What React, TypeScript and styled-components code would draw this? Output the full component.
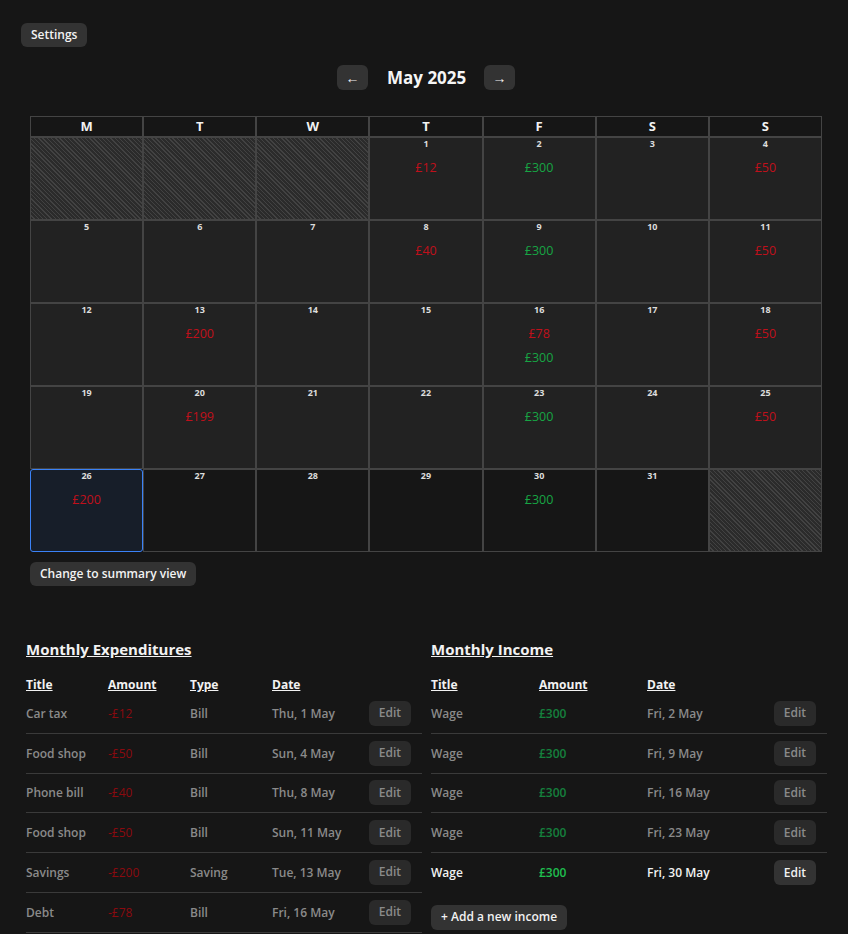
import React from "react";
import styled, { createGlobalStyle, css } from "styled-components";

const Global = createGlobalStyle`
  html, body { margin: 0; padding: 0; background: #161616; }
  body { font-family: "Segoe UI", "Open Sans", "Noto Sans", sans-serif; color: #f2f2f2; }
  * { box-sizing: border-box; }
`;

const Page = styled.div`
  padding: 22px 21px 0 21px;
  min-height: 934px;
`;

const Button = styled.button<{ $dim?: boolean }>`
  font-family: inherit;
  font-size: 12px;
  font-weight: 600;
  border: none;
  border-radius: 6px;
  background: ${(p) => (p.$dim ? "#2a2a2a" : "#333333")};
  color: ${(p) => (p.$dim ? "#8a8a8a" : "#f2f2f2")};
  height: 24px;
  padding: 0 10px;
  cursor: pointer;
  line-height: 24px;
`;

const Nav = styled.div`
  display: flex;
  justify-content: center;
  align-items: center;
  gap: 19px;
  margin-top: 18px;
  padding-left: 4px;
`;

const NavButton = styled(Button)`
  width: 31px;
  height: 25px;
  padding: 0;
  font-size: 14px;
`;

const MonthTitle = styled.h2`
  margin: 0;
  font-size: 17px;
  font-weight: 700;
  width: 78px;
  text-align: center;
  color: #f5f5f5;
  white-space: nowrap;
`;

const Calendar = styled.div`
  margin: 26px 5px 0 9px;
  display: grid;
  grid-template-columns: repeat(7, 1fr);
  width: 792px;
`;

const HeadCell = styled.div`
  border: 1px solid #444;
  height: 21px;
  font-size: 13px;
  font-weight: 700;
  text-align: center;
  line-height: 19px;
  background: #161616;
`;

type Kind = "blank" | "past" | "today" | "future";

const Cell = styled.div<{ $kind: Kind }>`
  border: 1px solid #444;
  height: 83px;
  display: flex;
  flex-direction: column;
  align-items: center;
  padding-top: 0;
  ${(p) =>
    p.$kind === "blank" &&
    css`
      background: repeating-linear-gradient(
        45deg,
        #2b2b2b 0px,
        #2b2b2b 2px,
        #424242 2px,
        #424242 3px
      );
    `}
  ${(p) => p.$kind === "past" && css`background: #222;`}
  ${(p) => p.$kind === "future" && css`background: #161616;`}
  ${(p) =>
    p.$kind === "today" &&
    css`
      background: #171e29;
      border-color: #3b82f6;
      border-radius: 3px;
    `}
`;

const DayNum = styled.div`
  font-size: 9px;
  font-weight: 700;
  color: #dcdcdc;
  line-height: 12px;
`;

const Amounts = styled.div`
  display: flex;
  flex-direction: column;
  align-items: center;
  gap: 6px;
  margin-top: 9px;
`;

const Amt = styled.div<{ $type: "out" | "in" }>`
  font-size: 12.5px;
  line-height: 18px;
  color: ${(p) => (p.$type === "out" ? "#c0101b" : "#17a544")};
`;

const SummaryRow = styled.div`
  margin: 9px 0 0 9px;
`;

const Sections = styled.div`
  display: grid;
  grid-template-columns: 396px 396px;
  gap: 9px;
  margin-top: 51px;
  padding-left: 5px;
`;

const Section = styled.section``;

const Heading = styled.h3`
  margin: 0 0 15px;
  font-size: 15px;
  font-weight: 700;
  text-decoration: underline;
  line-height: 24px;
  color: #f2f2f2;
`;

const Row = styled.div<{ $cols: string; $divider?: boolean; $head?: boolean }>`
  display: grid;
  grid-template-columns: ${(p) => p.$cols};
  align-items: center;
  height: ${(p) => (p.$head ? "auto" : "39.75px")};
  border-bottom: ${(p) => (p.$divider ? "1px solid #3a3a3a" : "none")};
`;

const HeadText = styled.div`
  font-size: 12px;
  font-weight: 700;
  text-decoration: underline;
  color: #f2f2f2;
  line-height: 18px;
`;

const CellText = styled.div<{ $bright?: boolean }>`
  font-size: 12px;
  font-weight: 600;
  color: ${(p) => (p.$bright ? "#f2f2f2" : "#8a8a8a")};
`;

const Money = styled.div<{ $type: "out" | "in"; $bright?: boolean }>`
  font-size: 12px;
  font-weight: ${(p) => (p.$type === "in" ? 600 : 400)};
  color: ${(p) =>
    p.$type === "out" ? "#8b0a0f" : p.$bright ? "#1fbf4f" : "#15803d"};
`;

const EditCell = styled.div`
  display: flex;
  justify-content: flex-end;
  padding-right: 11px;
`;

const EditButton = styled(Button)`
  width: 42px;
  height: 25px;
  padding: 0;
`;

const AddButton = styled(Button)`
  margin-top: 12px;
  height: 25px;
  padding: 0 10px;
`;

const calendar: { day?: number; kind: Kind; amts?: { t: "out" | "in"; v: string }[] }[] = [
  { kind: "blank" },
  { kind: "blank" },
  { kind: "blank" },
  { day: 1, kind: "past", amts: [{ t: "out", v: "£12" }] },
  { day: 2, kind: "past", amts: [{ t: "in", v: "£300" }] },
  { day: 3, kind: "past" },
  { day: 4, kind: "past", amts: [{ t: "out", v: "£50" }] },
  { day: 5, kind: "past" },
  { day: 6, kind: "past" },
  { day: 7, kind: "past" },
  { day: 8, kind: "past", amts: [{ t: "out", v: "£40" }] },
  { day: 9, kind: "past", amts: [{ t: "in", v: "£300" }] },
  { day: 10, kind: "past" },
  { day: 11, kind: "past", amts: [{ t: "out", v: "£50" }] },
  { day: 12, kind: "past" },
  { day: 13, kind: "past", amts: [{ t: "out", v: "£200" }] },
  { day: 14, kind: "past" },
  { day: 15, kind: "past" },
  { day: 16, kind: "past", amts: [{ t: "out", v: "£78" }, { t: "in", v: "£300" }] },
  { day: 17, kind: "past" },
  { day: 18, kind: "past", amts: [{ t: "out", v: "£50" }] },
  { day: 19, kind: "past" },
  { day: 20, kind: "past", amts: [{ t: "out", v: "£199" }] },
  { day: 21, kind: "past" },
  { day: 22, kind: "past" },
  { day: 23, kind: "past", amts: [{ t: "in", v: "£300" }] },
  { day: 24, kind: "past" },
  { day: 25, kind: "past", amts: [{ t: "out", v: "£50" }] },
  { day: 26, kind: "today", amts: [{ t: "out", v: "£200" }] },
  { day: 27, kind: "future" },
  { day: 28, kind: "future" },
  { day: 29, kind: "future" },
  { day: 30, kind: "future", amts: [{ t: "in", v: "£300" }] },
  { day: 31, kind: "future" },
  { kind: "blank" },
];

const expenses = [
  ["Car tax", "-£12", "Bill", "Thu, 1 May"],
  ["Food shop", "-£50", "Bill", "Sun, 4 May"],
  ["Phone bill", "-£40", "Bill", "Thu, 8 May"],
  ["Food shop", "-£50", "Bill", "Sun, 11 May"],
  ["Savings", "-£200", "Saving", "Tue, 13 May"],
  ["Debt", "-£78", "Bill", "Fri, 16 May"],
];

const incomes = [
  ["Wage", "£300", "Fri, 2 May", false],
  ["Wage", "£300", "Fri, 9 May", false],
  ["Wage", "£300", "Fri, 16 May", false],
  ["Wage", "£300", "Fri, 23 May", false],
  ["Wage", "£300", "Fri, 30 May", true],
] as const;

const EXP_COLS = "82px 82px 82px 1fr auto";
const INC_COLS = "108px 108px 1fr auto";

export default function App() {
  return (
    <>
      <Global />
      <Page>
        <Button>Settings</Button>
        <Nav>
          <NavButton>←</NavButton>
          <MonthTitle>May 2025</MonthTitle>
          <NavButton>→</NavButton>
        </Nav>
        <Calendar>
          {["M", "T", "W", "T", "F", "S", "S"].map((d, i) => (
            <HeadCell key={i}>{d}</HeadCell>
          ))}
          {calendar.map((c, i) => (
            <Cell key={i} $kind={c.kind}>
              {c.day && <DayNum>{c.day}</DayNum>}
              {c.amts && (
                <Amounts>
                  {c.amts.map((a, j) => (
                    <Amt key={j} $type={a.t}>
                      {a.v}
                    </Amt>
                  ))}
                </Amounts>
              )}
            </Cell>
          ))}
        </Calendar>
        <SummaryRow>
          <Button>Change to summary view</Button>
        </SummaryRow>
        <Sections>
          <Section>
            <Heading>Monthly Expenditures</Heading>
            <Row $cols={EXP_COLS} $head>
              <HeadText>Title</HeadText>
              <HeadText>Amount</HeadText>
              <HeadText>Type</HeadText>
              <HeadText>Date</HeadText>
              <div />
            </Row>
            {expenses.map((e, i) => (
              <Row key={i} $cols={EXP_COLS} $divider>
                <CellText>{e[0]}</CellText>
                <Money $type="out">{e[1]}</Money>
                <CellText>{e[2]}</CellText>
                <CellText>{e[3]}</CellText>
                <EditCell>
                  <EditButton $dim>Edit</EditButton>
                </EditCell>
              </Row>
            ))}
          </Section>
          <Section>
            <Heading>Monthly Income</Heading>
            <Row $cols={INC_COLS} $head>
              <HeadText>Title</HeadText>
              <HeadText>Amount</HeadText>
              <HeadText>Date</HeadText>
              <div />
            </Row>
            {incomes.map((r, i) => (
              <Row key={i} $cols={INC_COLS} $divider={i < incomes.length - 1}>
                <CellText $bright={r[3]}>{r[0]}</CellText>
                <Money $type="in" $bright={r[3]}>
                  {r[1]}
                </Money>
                <CellText $bright={r[3]}>{r[2]}</CellText>
                <EditCell>
                  <EditButton $dim={!r[3]}>Edit</EditButton>
                </EditCell>
              </Row>
            ))}
            <AddButton>+ Add a new income</AddButton>
          </Section>
        </Sections>
      </Page>
    </>
  );
}
